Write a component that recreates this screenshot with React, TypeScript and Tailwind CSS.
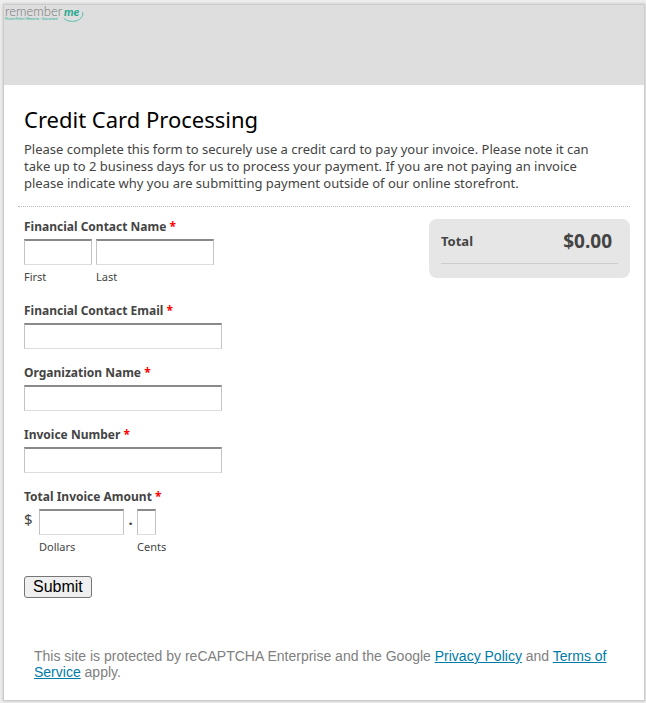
import React from 'react';

const inputClass =
  'block h-[26px] border border-t-2 border-[#c3c3c3] border-t-[#8a8a8a] border-b-[#ddd] bg-white px-1 text-sm text-[#333] outline-none';

const Required = () => <span className="text-[#f00]">*</span>;

const Logo = () => (
  <svg className="block h-5 w-21 overflow-visible" viewBox="0 0 84 20" role="img" aria-label="remember me">
    <text x="1" y="11" fontFamily="Lato, sans-serif" fontWeight="300" fontSize="13" fill="#777">
      remember
    </text>
    <text x="60" y="11" fontFamily="Lato, sans-serif" fontStyle="italic" fontWeight="700" fontSize="12" fill="#1fa890">
      me
    </text>
    <text x="1" y="15" fontFamily="Lato, sans-serif" fontWeight="700" fontSize="3" fill="#4dbba8">
      Picture Perfect Memories - Guaranteed
    </text>
    <path
      d="M60 13.5C64 17.500 73 17.500 77 13C78.800 11 79.300 9.500 78.500 7.500"
      fill="none"
      stroke="#4dbba8"
      strokeWidth="0.9"
      strokeLinecap="round"
    />
  </svg>
);

interface TextFieldProps {
  id: string;
  label: string;
  type?: string;
}

const TextField: React.FC<TextFieldProps> = ({ id, label, type = 'text' }) => (
  <div>
    <label htmlFor={id} className="mb-1 block text-[12px] leading-4 font-bold">
      {label} <Required />
    </label>
    <input id={id} type={type} className={`${inputClass} w-[198px]`} />
  </div>
);

export default function App() {
  return (
    <div className="min-h-screen bg-[#eee] pt-1 pr-px pb-0.5 pl-[3px] font-['Noto_Sans',sans-serif] text-[#444]">
      <main className="border border-[#ccc] bg-white pb-5 shadow-[0_0_3px_rgba(0,0,0,0.2)]">
        <h1 className="h-20 bg-[#dedede]">
          <Logo />
        </h1>

        <header className="mx-3.5 border-b border-dotted border-[#bbb] px-1.5 pt-[18px] pb-3.5">
          <h2 className="text-[22px] leading-8 text-black">Credit Card Processing</h2>
          <p className="mt-1.5 max-w-[590px] text-[13px] leading-[17px]">
            Please complete this form to securely use a credit card to pay your invoice. Please note it can
            take up to 2 business days for us to process your payment. If you are not paying an invoice
            please indicate why you are submitting payment outside of our online storefront.
          </p>
        </header>

        <form className="mt-3 mr-3.5 ml-5" onSubmit={(e) => e.preventDefault()}>
          <div className="flex items-start justify-between">
            <div className="flex flex-col gap-4">
              <fieldset>
                <legend className="mb-1 text-[12px] leading-4 font-bold">
                  Financial Contact Name <Required />
                </legend>
                <div className="flex gap-1">
                  <div className="flex flex-col-reverse">
                    <label htmlFor="first" className="mt-0.5 text-[11px] leading-5">First</label>
                    <input id="first" type="text" className={`${inputClass} w-[68px]`} />
                  </div>
                  <div className="flex flex-col-reverse">
                    <label htmlFor="last" className="mt-0.5 text-[11px] leading-5">Last</label>
                    <input id="last" type="text" className={`${inputClass} w-[118px]`} />
                  </div>
                </div>
              </fieldset>

              <TextField id="email" label="Financial Contact Email" type="email" />
              <TextField id="organization" label="Organization Name" />
              <TextField id="invoice" label="Invoice Number" />

              <fieldset>
                <legend className="mb-1 text-[12px] leading-4 font-bold">
                  Total Invoice Amount <Required />
                </legend>
                <div className="flex">
                  <span className="w-[15px] text-[15px] leading-5">$</span>
                  <div className="flex w-[85px] flex-col-reverse">
                    <label htmlFor="dollars" className="mt-0.5 text-[11px] leading-5">Dollars</label>
                    <input id="dollars" type="text" className={`${inputClass} w-full`} />
                  </div>
                  <span className="w-[13px] text-center text-[15px] leading-5 font-bold">.</span>
                  <div className="flex flex-col-reverse">
                    <label htmlFor="cents" className="mt-0.5 text-[11px] leading-5">Cents</label>
                    <input id="cents" type="text" className={`${inputClass} w-[19px]`} />
                  </div>
                </div>
              </fieldset>
            </div>

            <aside className="w-[201px] rounded-lg bg-[#e6e6e6] px-3 pt-2 pb-3.5">
              <div className="flex items-start justify-between border-b border-[#ccc] pr-1.5 pb-2 font-bold">
                <span className="text-[13px] leading-7">Total</span>
                <output className="text-[19px] leading-7">$0.00</output>
              </div>
            </aside>
          </div>

          <button
            type="submit"
            className="mt-[19px] block h-[22px] rounded-[3px] border border-[#767676] bg-[#efefef] px-2 font-['Liberation_Sans',sans-serif] text-[16px] leading-5 text-black"
          >
            Submit
          </button>
        </form>

        <p className="mt-[50px] px-[30px] font-['Liberation_Sans',sans-serif] text-[14px] leading-4 text-[#808080]">
          This site is protected by reCAPTCHA Enterprise and the Google{' '}
          <a href="#privacy" className="text-[#007ba8] underline">Privacy Policy</a> and{' '}
          <a href="#terms" className="text-[#007ba8] underline">Terms of Service</a> apply.
        </p>
      </main>
    </div>
  );
}
